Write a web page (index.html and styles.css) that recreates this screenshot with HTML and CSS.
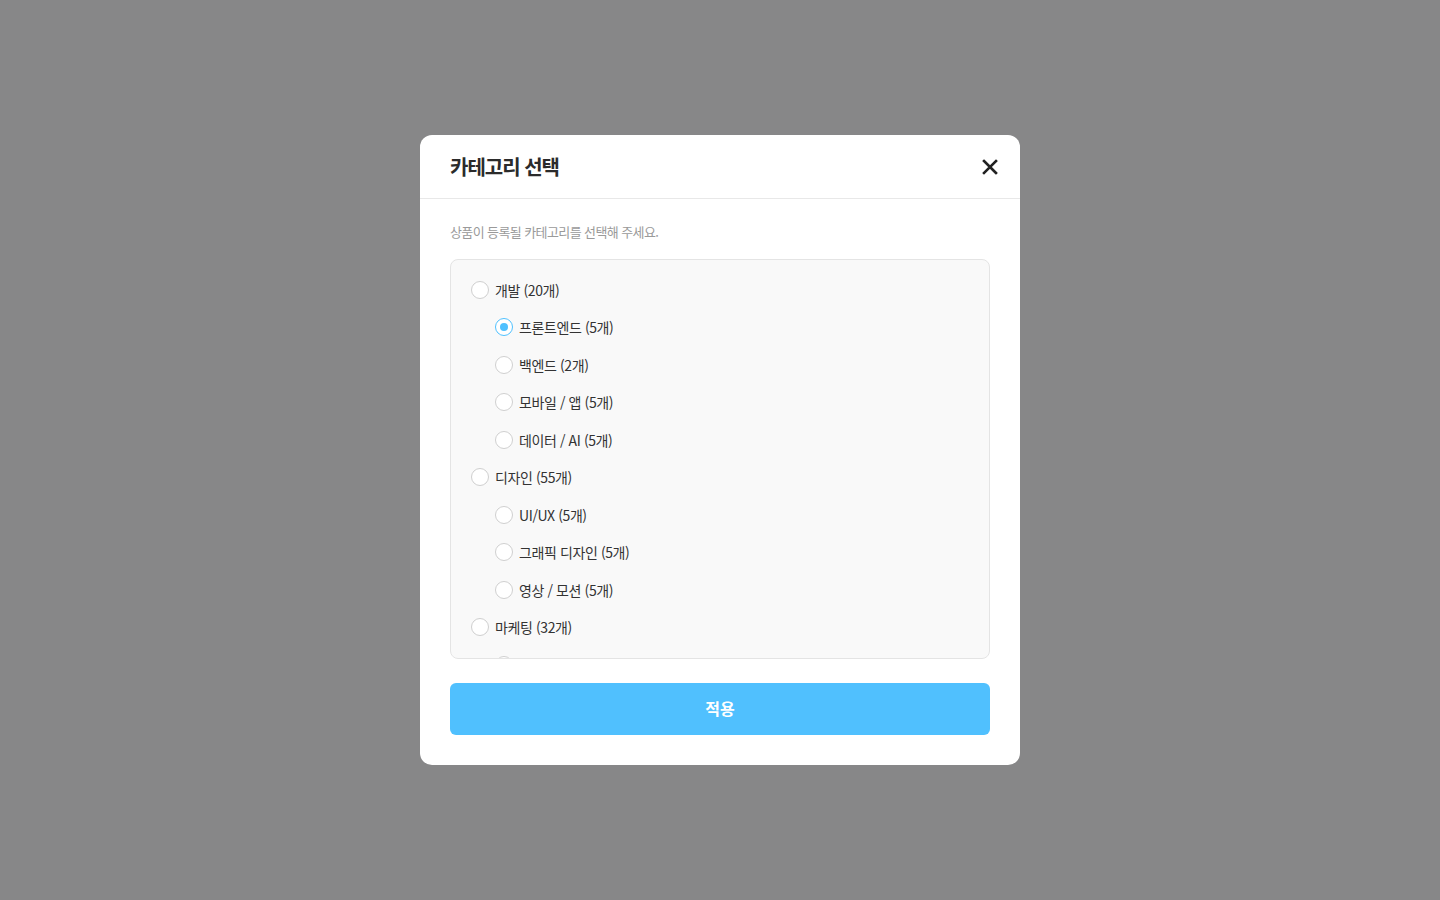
FILE: index.html
```html
<!DOCTYPE html>
<html lang="ko">
<head>
<meta charset="utf-8">
<title>카테고리 선택</title>
<link rel="stylesheet" href="styles.css">
</head>
<body>
<div class="overlay">
  <div class="modal">
    <div class="modal-header">
      <h2 class="modal-title">카테고리 선택</h2>
      <button class="close-btn" aria-label="닫기">
        <svg width="16" height="16" viewBox="0 0 16 16"><path d="M2 2 L14 14 M14 2 L2 14" stroke="#222" stroke-width="2.6" stroke-linecap="square"/></svg>
      </button>
    </div>
    <div class="modal-body">
      <p class="desc">상품이 등록될 카테고리를 선택해 주세요.</p>
      <div class="list">
        <label class="item"><span class="radio"></span><span class="label">개발 (20개)</span></label>
        <label class="item child"><span class="radio checked"></span><span class="label">프론트엔드 (5개)</span></label>
        <label class="item child"><span class="radio"></span><span class="label">백엔드 (2개)</span></label>
        <label class="item child"><span class="radio"></span><span class="label">모바일 / 앱 (5개)</span></label>
        <label class="item child"><span class="radio"></span><span class="label">데이터 / AI (5개)</span></label>
        <label class="item"><span class="radio"></span><span class="label">디자인 (55개)</span></label>
        <label class="item child"><span class="radio"></span><span class="label">UI/UX (5개)</span></label>
        <label class="item child"><span class="radio"></span><span class="label">그래픽 디자인 (5개)</span></label>
        <label class="item child"><span class="radio"></span><span class="label">영상 / 모션 (5개)</span></label>
        <label class="item"><span class="radio"></span><span class="label">마케팅 (32개)</span></label>
        <label class="item child"><span class="radio"></span><span class="label">콘텐츠 마케팅 (5개)</span></label>
      </div>
      <button class="apply-btn">적용</button>
    </div>
  </div>
</div>
</body>
</html>
```
FILE: styles.css
```css
* { box-sizing: border-box; }
html, body { margin: 0; padding: 0; }
body {
  font-family: "Noto Sans CJK KR", "Noto Sans", sans-serif;
  background: #878788;
  width: 1440px;
  height: 900px;
}
.overlay {
  width: 1440px;
  height: 900px;
  display: flex;
  justify-content: center;
  padding-top: 135px;
}
.modal {
  width: 600px;
  height: 630px;
  background: #fff;
  border-radius: 12px;
  display: flex;
  flex-direction: column;
  overflow: hidden;
}
.modal-header {
  height: 64px;
  display: flex;
  align-items: center;
  justify-content: space-between;
  padding: 0 12px 0 30px;
  border-bottom: 1px solid #e8e8e8;
}
.modal-title {
  margin: 0;
  font-size: 20px;
  font-weight: 700;
  color: #2b2b2b;
  letter-spacing: -1px;
}
.close-btn {
  border: 0;
  background: none;
  padding: 0;
  width: 36px;
  height: 36px;
  display: flex;
  align-items: center;
  justify-content: center;
  cursor: pointer;
}
.modal-body {
  padding: 23px 30px 30px;
  display: flex;
  flex-direction: column;
}
.desc {
  margin: 0 0 17px;
  font-size: 13px;
  line-height: 20px;
  color: #9a9a9a;
  letter-spacing: -0.6px;
}
.list {
  height: 400px;
  border: 1px solid #e4e4e4;
  border-radius: 8px;
  background: #f9f9f9;
  padding: 11px 20px;
  overflow: hidden;
}
.item {
  display: flex;
  align-items: center;
  height: 37.5px;
  gap: 6px;
  cursor: pointer;
}
.item.child { padding-left: 24px; }
.radio {
  width: 18px;
  height: 18px;
  border-radius: 50%;
  border: 1px solid #cfcfcf;
  background: #fff;
  flex: none;
  display: flex;
  align-items: center;
  justify-content: center;
}
.radio.checked { border-color: #4fc0fe; }
.radio.checked::after {
  content: "";
  width: 8px;
  height: 8px;
  border-radius: 50%;
  background: #4fc0fe;
}
.label {
  font-size: 14px;
  color: #333;
  letter-spacing: -0.4px;
}
.apply-btn {
  margin-top: 24px;
  height: 52px;
  border: 0;
  border-radius: 6px;
  background: #50c0fe;
  color: #fff;
  font-family: inherit;
  font-size: 16px;
  font-weight: 700;
  line-height: 1;
  padding: 0 0 2px;
  cursor: pointer;
}
```
